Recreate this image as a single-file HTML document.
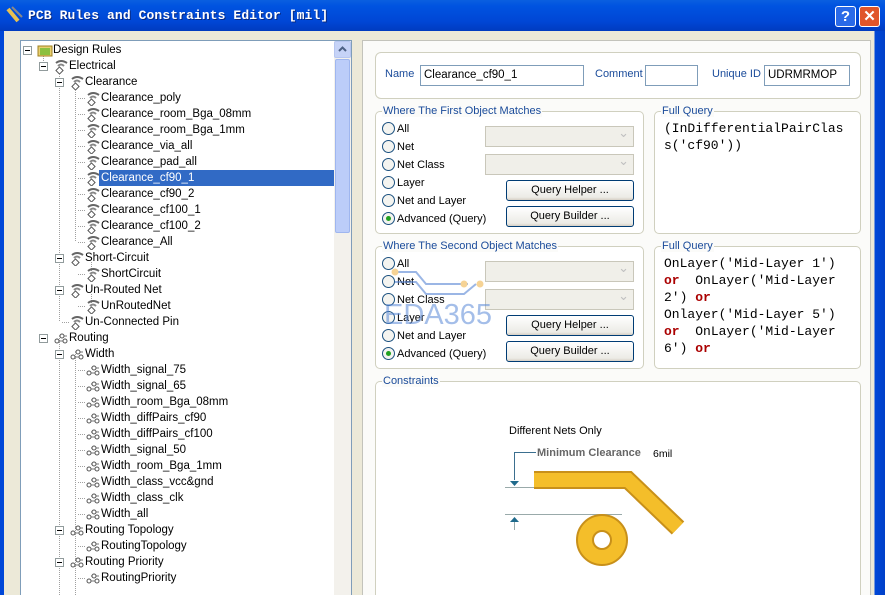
<!DOCTYPE html>
<html style="width:885px;height:595px;overflow:hidden"><head><meta charset="utf-8"><style>
*{margin:0;padding:0;box-sizing:border-box}
body{width:885px;height:595px;overflow:hidden;background:#ece9d8;font-family:"Liberation Sans",sans-serif;font-size:11.5px;color:#000;position:relative}
.abs{position:absolute}
#title{left:0;top:0;width:885px;height:31px;background:linear-gradient(#0a5fe0,#0053e0 20%,#0046d5 70%,#003bbf);}
#title .t{left:28px;top:8px;color:#fff;font:bold 13px "Liberation Mono",monospace;letter-spacing:0.1px;text-shadow:1px 1px #0a2a80}
.lb{left:0;top:31px;width:4px;height:564px;background:#0047d8}
.rb{left:872px;top:31px;width:13px;height:564px;background:linear-gradient(90deg,#ece9d8 0,#ece9d8 2px,#0047d8 3px,#0040c8)}
#tree{left:20px;top:40px;width:332px;height:555px;background:#fff;border:1px solid #7f9db9;border-bottom:none}
.row{position:absolute;height:16px;line-height:16px;white-space:nowrap}
.sel{background:#316ac5;color:#fff;padding:0 2px}
.exp{position:absolute;width:9px;height:9px;border:1px solid #919b9c;background:#fff}
.exp:after{content:"";position:absolute;left:1px;top:3px;width:5px;height:1px;background:#000}
#sb{left:334px;top:41px;width:17px;height:554px;background:#f3f1ec}
#sbup{left:334px;top:41px;width:17px;height:17px;background:#c6d3f7;border:1px solid #b6c6f0;border-radius:2px}
#thumb{left:335px;top:59px;width:15px;height:174px;background:#bccdf9;border:1px solid #9fb6ef;border-radius:2px}
#right{left:362px;top:40px;width:509px;height:555px;background:#fbfbf9;border:1px solid #c3c3bb;border-bottom:none}
.gb{position:absolute;border:1px solid #d0d0bf;border-radius:5px;background:#fff}
.gt{position:absolute;top:-7px;left:6px;background:#fbfbf9;padding:0 1px;color:#1a4b9a;font-size:11px;line-height:12px}
.lbl{position:absolute;color:#1a4b9a;font-size:11px}
.inp{position:absolute;border:1px solid #7f9db9;background:#fff;height:21px;line-height:19px;padding-left:3px;font-size:11.5px}
.rad{position:absolute;font-size:11px;line-height:13px;white-space:nowrap}
.rad i{display:inline-block;width:13px;height:13px;border:1px solid #1c5180;border-radius:50%;vertical-align:-3px;margin-right:2px;background:#f4f4f0;position:relative}
.rad i.on:after{content:"";position:absolute;left:3px;top:3px;width:5px;height:5px;border-radius:50%;background:#21a121}
.cmb{position:absolute;width:149px;height:21px;background:#f0efe9;border:1px solid #c9c7ba}
.cmb:after{content:"⌄";position:absolute;right:4px;top:-2px;color:#c0c0c0;font-size:13px}
.btn{position:absolute;width:128px;height:21px;border:1px solid #003c74;border-radius:3px;background:linear-gradient(#fff,#ecebe6 85%,#d6d0c5);text-align:center;line-height:19px;font-size:11px}
.q{position:absolute;font:13px "Liberation Mono",monospace;line-height:17px;white-space:pre;color:#000}
.q b{color:#a00;font-weight:bold}
</style></head><body>
<div id="title" class="abs">
<svg class="abs" style="left:6px;top:5px" width="20" height="20"><path d="M2 4 L12 16" stroke="#e8c050" stroke-width="4"/><path d="M6 2 L16 12" stroke="#888" stroke-width="2"/></svg>
<div class="abs t">PCB Rules and Constraints Editor [mil]</div>
<div class="abs" style="left:835px;top:6px;width:21px;height:21px;background:#2a6ae8;border:1px solid #fff;border-radius:3px;color:#fff;font:bold 15px 'Liberation Sans';text-align:center;line-height:19px">?</div>
<div class="abs" style="left:859px;top:6px;width:21px;height:21px;background:#e0552a;border:1px solid #fff;border-radius:3px;color:#fff;font:bold 15px 'Liberation Sans';text-align:center;line-height:19px">✕</div>
</div>
<div class="abs lb"></div><div class="abs rb"></div>

<div id="tree" class="abs"></div>
<div id="sb" class="abs"></div><div id="sbup" class="abs"><svg width="15" height="15"><path d="M4 9 L7.5 5.5 L11 9" stroke="#4d6185" stroke-width="2" fill="none"/></svg></div>
<div id="thumb" class="abs"></div>

<div id="treerows" class="abs" style="left:0;top:0">
<svg class="abs" style="left:0;top:0" width="334" height="595">
<g stroke="#a0a0a0" stroke-dasharray="1,1" fill="none">
<path d="M43.5 54 V66 M59.5 70 V322 M75.5 86 V242 M59.5 338 V595 M75.5 354 V595 M91.5 262 V274 M91.5 294 V306"/>
</g>
</svg>
</div>

<div id="right" class="abs"></div>
<div class="gb" style="left:375px;top:52px;width:486px;height:47px;border-radius:6px"></div>
<div class="lbl" style="left:385px;top:68px">Name</div>
<div class="inp" style="left:420px;top:65px;width:164px">Clearance_cf90_1</div>
<div class="lbl" style="left:595px;top:68px">Comment</div>
<div class="inp" style="left:645px;top:65px;width:53px"></div>
<div class="lbl" style="left:712px;top:68px">Unique ID</div>
<div class="inp" style="left:764px;top:65px;width:86px">UDRMRMOP</div>

<div class="gb" style="left:375px;top:111px;width:269px;height:123px"><div class="gt">Where The First Object Matches</div></div>
<div class="gb" style="left:654px;top:111px;width:207px;height:123px"><div class="gt">Full Query</div></div>
<div class="q" style="left:664px;top:120px">(InDifferentialPairClas
s('cf90'))</div>

<div class="gb" style="left:375px;top:246px;width:269px;height:123px"><div class="gt">Where The Second Object Matches</div></div>
<div class="gb" style="left:654px;top:246px;width:207px;height:123px"><div class="gt">Full Query</div></div>
<div class="q" style="left:664px;top:255px">OnLayer('Mid-Layer 1')
<b>or</b>  OnLayer('Mid-Layer
2') <b>or</b>
Onlayer('Mid-Layer 5')
<b>or</b>  OnLayer('Mid-Layer
6') <b>or</b></div>

<div class="gb" style="left:375px;top:381px;width:486px;height:230px"><div class="gt">Constraints</div></div>

<div id="rads"></div>
<svg class="abs" style="left:500px;top:420px" width="200" height="160">
<text x="9" y="14" font-family="Liberation Sans" font-size="11" fill="#000">Different Nets Only</text>
<path d="M14.5 32 V60 M14.5 32.5 H36" stroke="#3b6f8f" stroke-width="1"/>
<path d="M10 61 L19 61 L14.5 66 Z M10 102 L19 102 L14.5 97 Z" fill="#1f6a8c"/>
<path d="M5 67.5 H35 M5 94.5 H122 M14.5 102 V110" stroke="#9aa" stroke-width="1"/>
<text x="37" y="36" font-family="Liberation Sans" font-size="11" font-weight="bold" fill="#666">Minimum Clearance</text>
<text x="153" y="37" font-family="Liberation Sans" font-size="10.5" fill="#000">6mil</text>
<path d="M34 60 H128 L178 108" stroke="#c8901a" stroke-width="18" fill="none"/>
<path d="M34 60 H128 L178 108" stroke="#f4be2a" stroke-width="14" fill="none"/>
<circle cx="102" cy="120" r="25" fill="#f4be2a" stroke="#c8901a" stroke-width="2"/>
<circle cx="102" cy="120" r="9" fill="#fff" stroke="#c8901a" stroke-width="2"/>
</svg>

<svg class="abs" style="left:380px;top:262px;opacity:.55" width="130" height="70">
<path d="M15 10 H36 L46 22 H88 M15 20 H36 L46 32 H84 L96 22" stroke="#4a7bd0" stroke-width="2" fill="none"/>
<circle cx="15" cy="10" r="3.5" fill="#f0b040"/><circle cx="84" cy="22" r="3.5" fill="#f0b040"/><circle cx="100" cy="22" r="3.5" fill="#f0b040"/>
<text x="4" y="62" font-family="Liberation Sans" font-size="29" fill="#5b8ad8">EDA365</text>
</svg>

<script>
var rows=[
[0,"Design Rules","f"],[1,"Electrical","e"],[2,"Clearance","e"],[3,"Clearance_poly"],[3,"Clearance_room_Bga_08mm"],[3,"Clearance_room_Bga_1mm"],[3,"Clearance_via_all"],[3,"Clearance_pad_all"],[3,"Clearance_cf90_1",0,1],[3,"Clearance_cf90_2"],[3,"Clearance_cf100_1"],[3,"Clearance_cf100_2"],[3,"Clearance_All"],
[2,"Short-Circuit","e"],[3,"ShortCircuit"],[2,"Un-Routed Net","e"],[3,"UnRoutedNet"],[2,"Un-Connected Pin"],
[1,"Routing","r"],[2,"Width","r"],[3,"Width_signal_75"],[3,"Width_signal_65"],[3,"Width_room_Bga_08mm"],[3,"Width_diffPairs_cf90"],[3,"Width_diffPairs_cf100"],[3,"Width_signal_50"],[3,"Width_room_Bga_1mm"],[3,"Width_class_vcc&gnd"],[3,"Width_class_clk"],[3,"Width_all"],
[2,"Routing Topology","r"],[3,"RoutingTopology"],[2,"Routing Priority","r"],[3,"RoutingPriority"]];
var h="",type="e";
var elec='<svg width="16" height="16" style="position:absolute;left:0;top:0"><path d="M3 5 Q8 1 14 5" stroke="#666" stroke-width="2" fill="none"/><path d="M5 8 Q8 5 11 8" stroke="#888" stroke-width="2" fill="none"/><rect x="4" y="10" width="5" height="5" transform="rotate(45 6.5 12.5)" fill="#fff" stroke="#555"/></svg>';
var rout='<svg width="16" height="16" style="position:absolute;left:0;top:0"><path d="M2 11 H14 M6 6 H14" stroke="#777"/><circle cx="4" cy="11" r="2" fill="#fff" stroke="#555"/><circle cx="12" cy="11" r="2" fill="#fff" stroke="#555"/><circle cx="9" cy="6" r="2" fill="#fff" stroke="#555"/></svg>';
var fold='<svg width="16" height="16" style="position:absolute;left:0;top:0"><rect x="1" y="4" width="14" height="10" fill="#e8d070" stroke="#a08020"/><rect x="3" y="6" width="10" height="7" fill="#8cc040"/></svg>';
rows.forEach(function(r,i){
 var y=42+i*16,l=r[0];
 if(r[2]=="r"&&l==1)type="r";
 var x=37+l*16;
 if(r[2]) h+='<div class="exp" style="left:'+(x-14)+'px;top:'+(y+4)+'px"></div>';
 else if(l>0) h+='<svg class="abs" style="left:'+(x-7)+'px;top:'+(y+8)+'px" width="8" height="1"><path d="M0 .5H8" stroke="#a0a0a0" stroke-dasharray="1,1"/></svg>';
 var ic=r[2]=="f"?fold:(type=="r"?rout:elec);
 h+='<div class="abs" style="left:'+x+'px;top:'+y+'px;width:16px;height:16px">'+ic+'</div>';
 h+='<div class="row'+(r[3]?' sel':'')+'" style="left:'+(x+(r[3]?14:16))+'px;top:'+y+'px;'+(r[3]?'width:235px':'')+'">'+r[1].replace("&","&amp;")+'</div>';
});
document.getElementById("treerows").insertAdjacentHTML("beforeend",h);
var rh="";
[0,135].forEach(function(o){
 var labs=["All","Net","Net Class","Layer","Net and Layer","Advanced (Query)"];
 labs.forEach(function(t,k){rh+='<div class="rad" style="left:382px;top:'+(122+o+k*18)+'px"><i'+(k==5?' class="on"':'')+'></i>'+t+'</div>';});
 rh+='<div class="cmb" style="left:485px;top:'+(126+o)+'px"></div><div class="cmb" style="left:485px;top:'+(154+o)+'px"></div>';
 rh+='<div class="btn" style="left:506px;top:'+(180+o)+'px">Query Helper ...</div><div class="btn" style="left:506px;top:'+(206+o)+'px">Query Builder ...</div>';
});
document.getElementById("rads").outerHTML=rh;
</script>
</body></html>
